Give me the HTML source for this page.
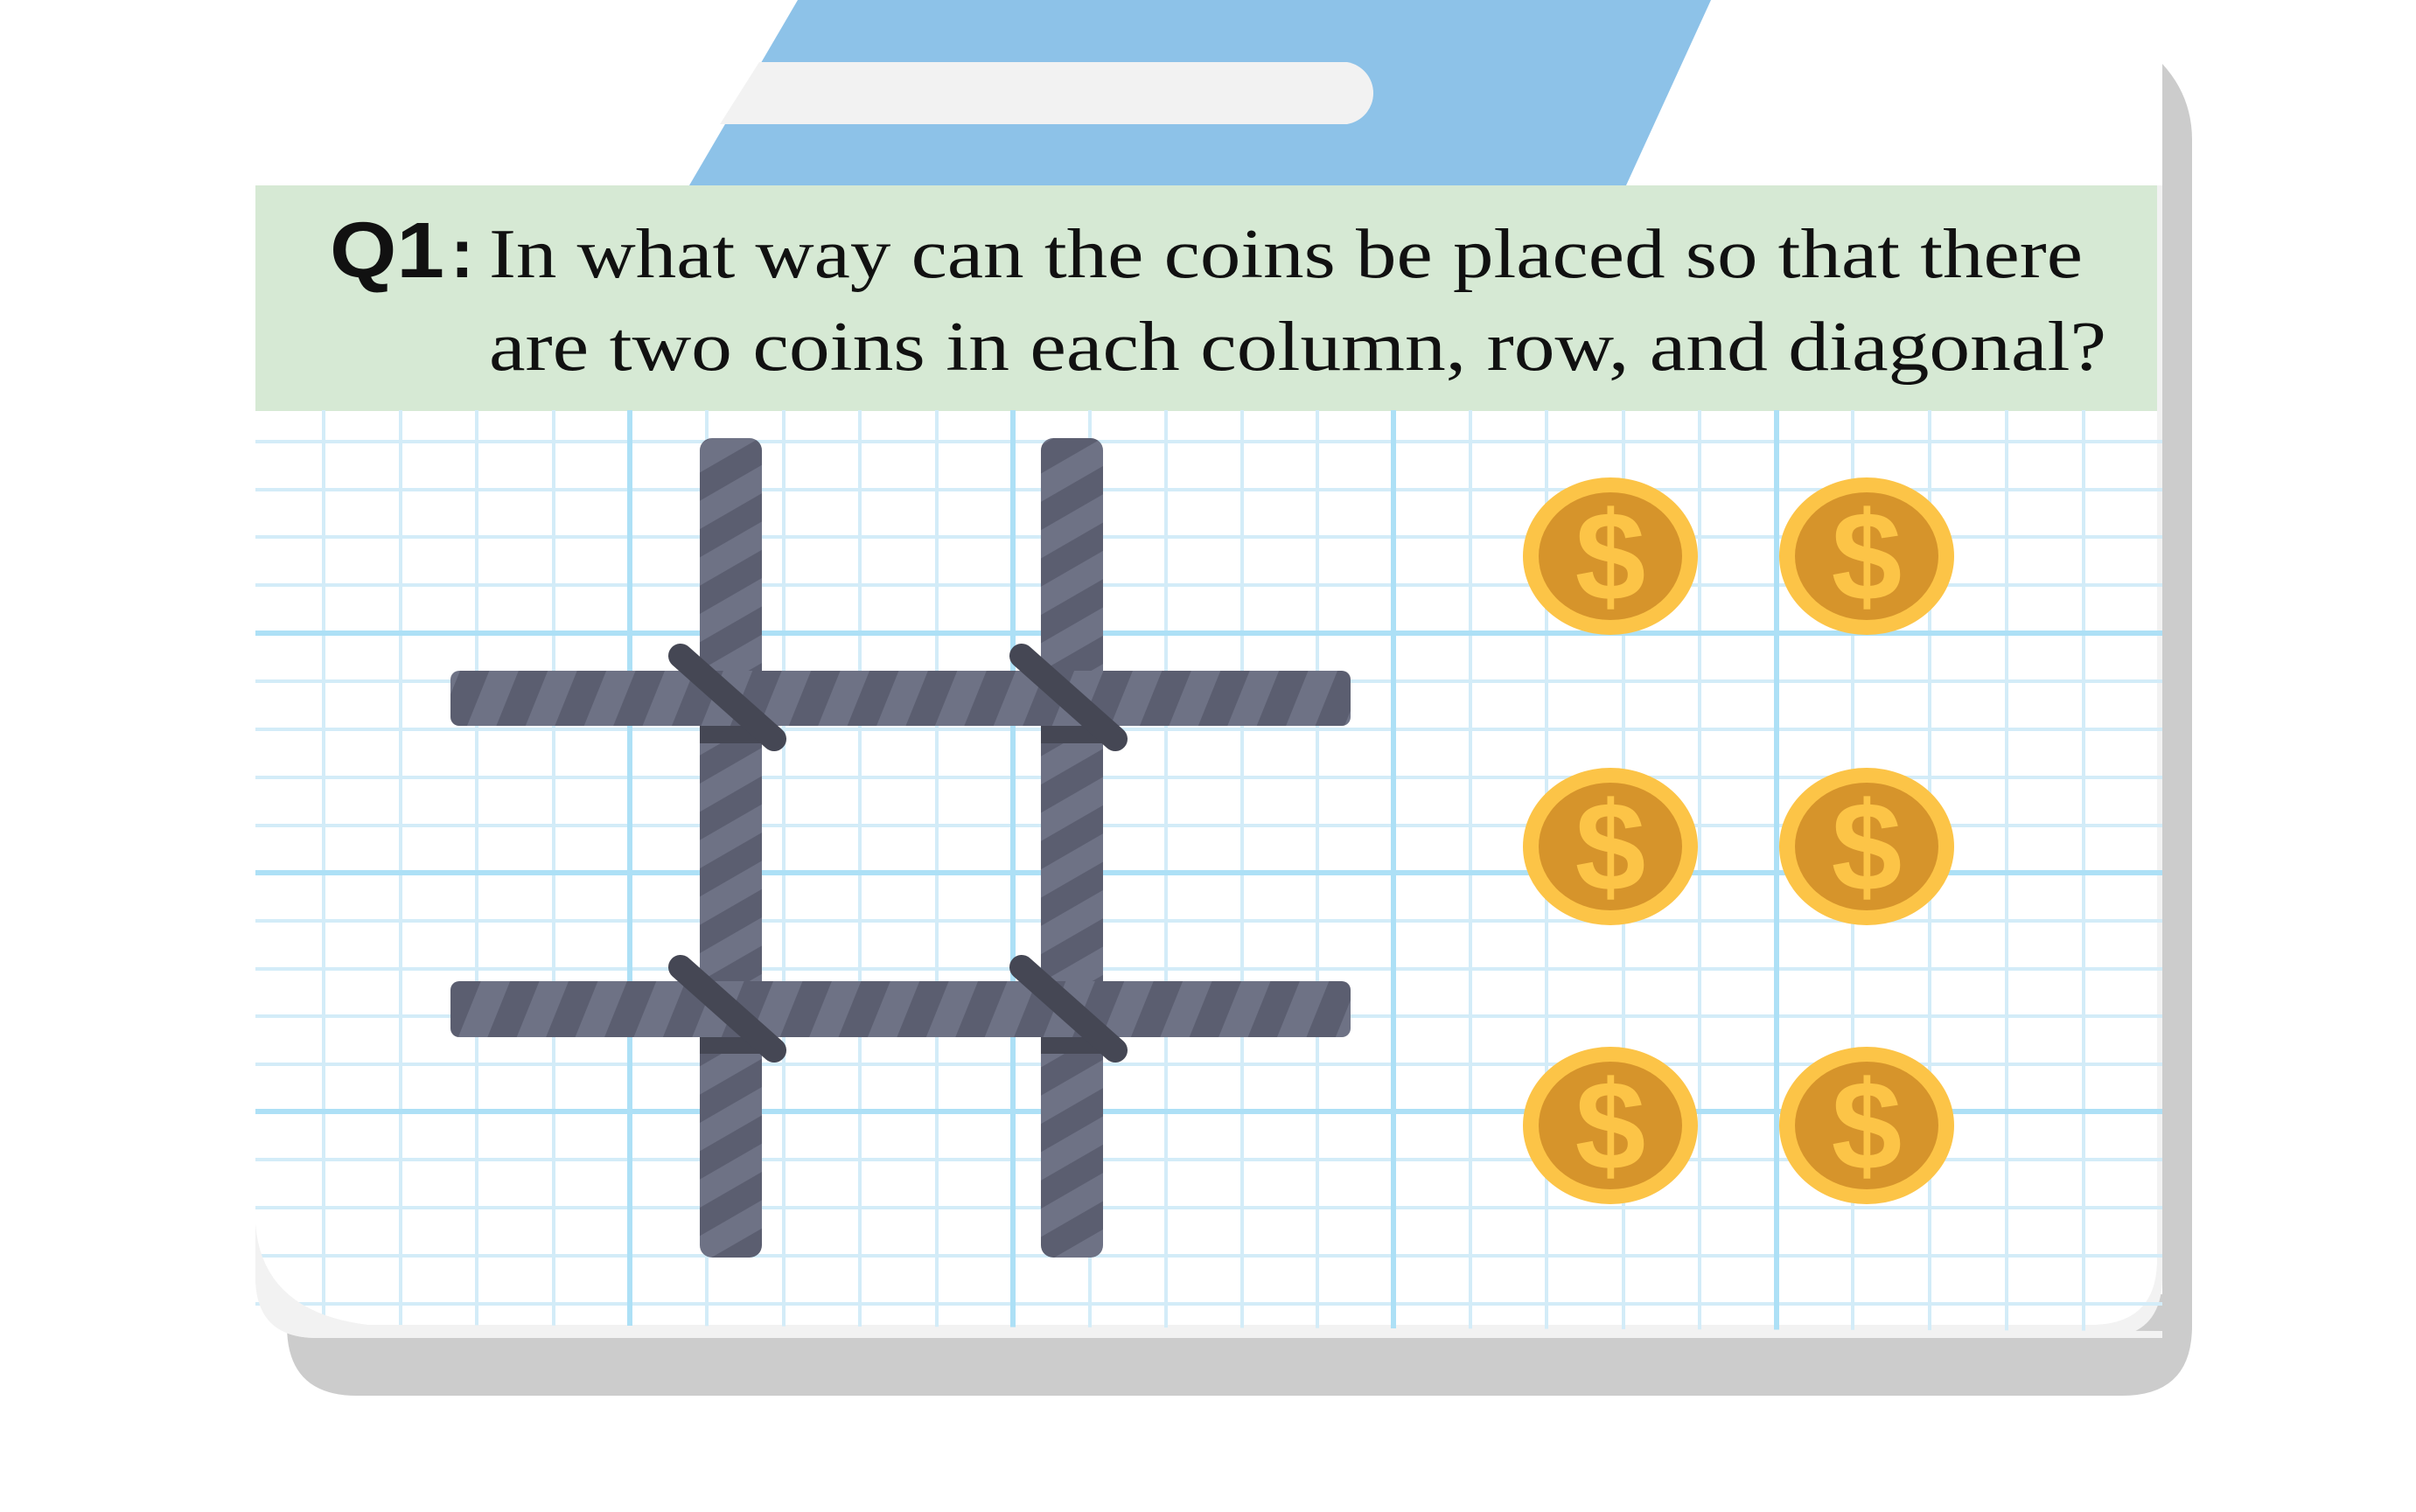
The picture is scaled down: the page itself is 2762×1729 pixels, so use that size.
<!DOCTYPE html>
<html><head><meta charset="utf-8"><style>html,body{margin:0;padding:0;background:#fff}svg{display:block}</style></head>
<body>
<svg width="2762" height="1729" viewBox="0 0 2762 1729" xmlns="http://www.w3.org/2000/svg">
<defs>
<pattern id="pv" patternUnits="userSpaceOnUse" width="200" height="56" patternTransform="rotate(-30)">
<rect width="200" height="56" fill="#6e7285"/><rect y="28" width="200" height="28" fill="#5b5e70"/>
</pattern>
<pattern id="ph" patternUnits="userSpaceOnUse" width="62" height="200" patternTransform="rotate(22)">
<rect width="62" height="200" fill="#6e7285"/><rect x="31" width="31" height="200" fill="#5b5e70"/>
</pattern>
<clipPath id="cc"><rect x="292" y="469" width="2180" height="1061"/></clipPath>
</defs>
<!-- tab -->
<polygon points="912,0 1956,0 1859,212 788,212" fill="#8dc2e8"/>
<path d="M868,71 L1540,71 A36,36 0 0 1 1540,142 L823,142 Z" fill="#f2f2f2"/>
<!-- shadow -->
<path d="M2472,73 Q2506,110 2506,160 L2506,1516 Q2506,1596 2426,1596 L408,1596 Q328,1596 328,1516 L328,1480 L2472,1480 Z" fill="#cccccc"/>
<!-- card -->
<path d="M292,212 L2472,212 L2472,1460 Q2472,1530 2402,1530 L362,1530 Q292,1530 292,1460 Z" fill="#f2f2f2"/>
<path d="M292,212 L2466,212 L2466,1440 Q2466,1515 2390,1515 L420,1515 Q300,1500 292,1400 Z" fill="#fff"/>
<rect x="292" y="212" width="2174" height="258" fill="#d6e9d4"/>
<!-- grid -->
<g clip-path="url(#cc)">
<g stroke="#d3ecf8" stroke-width="4">
<line x1="370" y1="469" x2="370" y2="1530"/><line x1="458" y1="469" x2="458" y2="1530"/><line x1="545" y1="469" x2="545" y2="1530"/><line x1="633" y1="469" x2="633" y2="1530"/>
<line x1="808" y1="469" x2="808" y2="1530"/><line x1="896" y1="469" x2="896" y2="1530"/><line x1="983" y1="469" x2="983" y2="1530"/><line x1="1071" y1="469" x2="1071" y2="1530"/>
<line x1="1246" y1="469" x2="1246" y2="1530"/><line x1="1333" y1="469" x2="1333" y2="1530"/><line x1="1420" y1="469" x2="1420" y2="1530"/><line x1="1506" y1="469" x2="1506" y2="1530"/>
<line x1="1681" y1="469" x2="1681" y2="1530"/><line x1="1768" y1="469" x2="1768" y2="1530"/><line x1="1856" y1="469" x2="1856" y2="1530"/><line x1="1943" y1="469" x2="1943" y2="1530"/>
<line x1="2118" y1="469" x2="2118" y2="1530"/><line x1="2206" y1="469" x2="2206" y2="1530"/><line x1="2294" y1="469" x2="2294" y2="1530"/><line x1="2382" y1="469" x2="2382" y2="1530"/>
<line x1="292" y1="505" x2="2472" y2="505"/><line x1="292" y1="560" x2="2472" y2="560"/><line x1="292" y1="614" x2="2472" y2="614"/><line x1="292" y1="669" x2="2472" y2="669"/>
<line x1="292" y1="779" x2="2472" y2="779"/><line x1="292" y1="834" x2="2472" y2="834"/><line x1="292" y1="889" x2="2472" y2="889"/><line x1="292" y1="944" x2="2472" y2="944"/>
<line x1="292" y1="1053" x2="2472" y2="1053"/><line x1="292" y1="1108" x2="2472" y2="1108"/><line x1="292" y1="1162" x2="2472" y2="1162"/><line x1="292" y1="1217" x2="2472" y2="1217"/>
<line x1="292" y1="1326" x2="2472" y2="1326"/><line x1="292" y1="1381" x2="2472" y2="1381"/><line x1="292" y1="1436" x2="2472" y2="1436"/><line x1="292" y1="1491" x2="2472" y2="1491"/>
</g>
<g stroke="#ade0f6" stroke-width="6">
<line x1="720" y1="469" x2="720" y2="1530"/><line x1="1158" y1="469" x2="1158" y2="1530"/><line x1="1593" y1="469" x2="1593" y2="1530"/><line x1="2031" y1="469" x2="2031" y2="1530"/>
<line x1="292" y1="724" x2="2472" y2="724"/><line x1="292" y1="998" x2="2472" y2="998"/><line x1="292" y1="1271" x2="2472" y2="1271"/>
</g>
</g>
<path d="M292,1400 Q300,1500 420,1515 L2472,1522 L2472,1530 L362,1530 Q292,1530 292,1460 Z" fill="#f2f2f2"/>
<!-- bars -->
<rect x="800" y="501" width="71" height="937" rx="14" fill="url(#pv)"/>
<rect x="1190" y="501" width="71" height="937" rx="14" fill="url(#pv)"/>
<rect x="800" y="820" width="71" height="30" fill="#454754"/>
<rect x="1190" y="820" width="71" height="30" fill="#454754"/>
<rect x="800" y="1175" width="71" height="30" fill="#454754"/>
<rect x="1190" y="1175" width="71" height="30" fill="#454754"/>
<rect x="515" y="767" width="1029" height="63" rx="10" fill="url(#ph)"/>
<rect x="515" y="1122" width="1029" height="64" rx="10" fill="url(#ph)"/>
<g stroke="#454754" stroke-width="28" stroke-linecap="round">
<line x1="778" y1="750" x2="885" y2="845"/>
<line x1="1168" y1="750" x2="1275" y2="845"/>
<line x1="778" y1="1106" x2="885" y2="1201"/>
<line x1="1168" y1="1106" x2="1275" y2="1201"/>
</g>
<!-- coins -->
<g font-family="Liberation Sans, sans-serif" font-weight="bold" font-size="145" fill="#fcc447" text-anchor="middle">
<g transform="translate(1841,636)"><ellipse rx="100" ry="90" fill="#fcc447"/><ellipse rx="82" ry="73" fill="#d6942b"/><text y="50">$</text></g>
<g transform="translate(2134,636)"><ellipse rx="100" ry="90" fill="#fcc447"/><ellipse rx="82" ry="73" fill="#d6942b"/><text y="50">$</text></g>
<g transform="translate(1841,968)"><ellipse rx="100" ry="90" fill="#fcc447"/><ellipse rx="82" ry="73" fill="#d6942b"/><text y="50">$</text></g>
<g transform="translate(2134,968)"><ellipse rx="100" ry="90" fill="#fcc447"/><ellipse rx="82" ry="73" fill="#d6942b"/><text y="50">$</text></g>
<g transform="translate(1841,1287)"><ellipse rx="100" ry="90" fill="#fcc447"/><ellipse rx="82" ry="73" fill="#d6942b"/><text y="50">$</text></g>
<g transform="translate(2134,1287)"><ellipse rx="100" ry="90" fill="#fcc447"/><ellipse rx="82" ry="73" fill="#d6942b"/><text y="50">$</text></g>
</g>
<!-- text -->
<text x="377" y="317" font-family="Liberation Sans, sans-serif" font-weight="bold" font-size="90" fill="#111" textLength="131" lengthAdjust="spacingAndGlyphs">Q1</text>
<text x="515" y="317" font-family="Liberation Sans, sans-serif" font-weight="bold" font-size="80" fill="#111">:</text>
<text x="559" y="317" font-family="Liberation Serif, serif" font-size="80" fill="#111" textLength="1822" lengthAdjust="spacingAndGlyphs">In what way can the coins be placed so that there</text>
<text x="559" y="423" font-family="Liberation Serif, serif" font-size="80" fill="#111" textLength="1849" lengthAdjust="spacingAndGlyphs">are two coins in each column, row, and diagonal?</text>
</svg>
</body></html>
